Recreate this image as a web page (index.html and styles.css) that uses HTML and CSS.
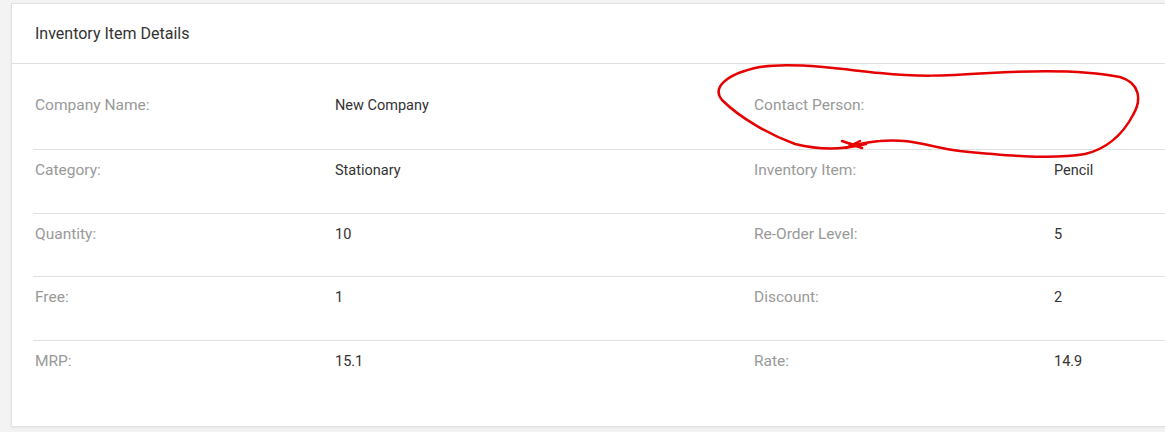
FILE: index.html
```html
<!DOCTYPE html>
<html>
<head>
<meta charset="utf-8">
<link rel="stylesheet" href="styles.css">
</head>
<body>
<div class="page">
  <div class="card">
    <div class="card-header">Inventory Item Details</div>
    <div class="card-body">
      <div class="row first">
        <div class="label">Company Name:</div><div class="value">New Company</div>
        <div class="label">Contact Person:</div><div class="value"></div>
      </div>
      <div class="row">
        <div class="label">Category:</div><div class="value">Stationary</div>
        <div class="label">Inventory Item:</div><div class="value">Pencil</div>
      </div>
      <div class="row short">
        <div class="label">Quantity:</div><div class="value">10</div>
        <div class="label">Re-Order Level:</div><div class="value">5</div>
      </div>
      <div class="row">
        <div class="label">Free:</div><div class="value">1</div>
        <div class="label">Discount:</div><div class="value">2</div>
      </div>
      <div class="row">
        <div class="label">MRP:</div><div class="value">15.1</div>
        <div class="label">Rate:</div><div class="value">14.9</div>
      </div>
    </div>
  </div>
  <svg class="annotation" width="1165" height="432" viewBox="0 0 1165 432">
    <path d="M 866 144 C 840 150, 820 150, 795 144 C 770 135, 740 118, 722 100 C 712 88, 725 74, 760 67 C 790 62, 830 68, 880 73 C 920 77, 940 76, 990 73 C 1040 70, 1090 71, 1120 77 C 1140 83, 1142 100, 1133 115 C 1124 132, 1110 148, 1085 154 C 1050 160, 1000 155, 960 151 C 930 147, 910 138, 880 141 C 865 142, 855 147, 848 143" />
    <path d="M 842 141 L 862 148 M 846 148 L 860 141" />
  </svg>
</div>
</body>
</html>
```
FILE: styles.css
```css
html, body {
  margin: 0;
  padding: 0;
  overflow: hidden;
  background: #f3f3f3;
}
body {
  font-family: Roboto, "Liberation Sans", Arial, sans-serif;
  font-size: 14px;
}
.page {
  position: relative;
  width: 1165px;
  height: 432px;
  padding: 3px 0 0 11px;
  box-sizing: border-box;
  overflow: hidden;
}
.card {
  width: 1500px;
  background: #fff;
  border: 1px solid #e2e2e2;
  border-right: none;
  box-shadow: 0 1px 2px rgba(0,0,0,0.06);
}
.card-header {
  height: 59px;
  line-height: 59px;
  padding: 0 23px;
  font-size: 16px;
  color: #333;
  border-bottom: 1px solid #e0e0e0;
}
.card-body {
  padding: 21px 0 22px 21px;
}
.row {
  display: grid;
  grid-template-columns: 301px 418px 301px 1fr;
  align-items: baseline;
  border-top: 1px solid #e0e0e0;
  height: 64px;
  padding: 10px 0 0;
  box-sizing: border-box;
  line-height: 20px;
}
.row.first {
  border-top: none;
}
.row.short {
  height: 63px;
}
.label {
  color: #999;
  font-size: 15.5px;
  padding-left: 2px;
}
.value {
  color: #333;
  font-size: 14.5px;
  padding-left: 1px;
}
.annotation {
  position: absolute;
  left: 0;
  top: 0;
  pointer-events: none;
  fill: none;
  stroke: #e60000;
  stroke-width: 2.5;
  stroke-linecap: round;
  stroke-linejoin: round;
}
```
